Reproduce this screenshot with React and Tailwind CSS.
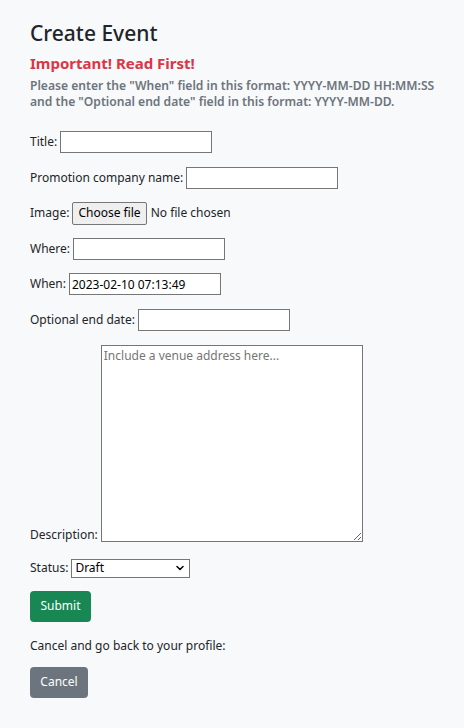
import { ChevronDown } from "lucide-react";

const font = { fontFamily: '"Segoe UI", "Noto Sans", "Liberation Sans", sans-serif' };

function Field({ label, children }) {
  return (
    <div className="flex items-center h-[22px] mb-[13.6px] text-[12px] text-[#212529]">
      <span className="mr-[3px]">{label}</span>
      {children}
    </div>
  );
}

function TextInput({ value = "" }) {
  return (
    <input
      type="text"
      defaultValue={value}
      className="w-[152px] h-[22px] border border-[#767676] bg-white px-[2px] text-[12px] text-black outline-none"
    />
  );
}

export default function App() {
  return (
    <div className="min-h-[728px] bg-[#f8f9fa] px-[30px] pt-[18px]" style={font}>
      <h1 className="text-[21px] font-medium leading-[30px] text-[#212529]">Create Event</h1>
      <h2 className="mt-[5px] text-[15px] font-bold leading-[20px] text-[#dc3545]">
        Important! Read First!
      </h2>
      <div className="mt-[5px] text-[12.1px] font-semibold leading-[16px] text-[#6c757d] whitespace-nowrap">
        <p>Please enter the "When" field in this format: YYYY-MM-DD HH:MM:SS</p>
        <p>and the "Optional end date" field in this format: YYYY-MM-DD.</p>
      </div>

      <form className="mt-[21px]">
        <Field label="Title:">
          <TextInput />
        </Field>
        <Field label="Promotion company name:">
          <TextInput />
        </Field>
        <Field label="Image:">
          <span className="h-[23px] px-[5px] flex items-center rounded-[2px] border border-[#767676] bg-[#efefef] text-[12px] text-black">
            Choose file
          </span>
          <span className="ml-[4px]">No file chosen</span>
        </Field>
        <Field label="Where:">
          <TextInput />
        </Field>
        <Field label="When:">
          <TextInput value="2023-02-10 07:13:49" />
        </Field>
        <Field label="Optional end date:">
          <TextInput />
        </Field>

        <div className="flex items-end text-[12px] text-[#212529] mb-[17px]">
          <span className="mr-[3px] leading-[16px] mb-[-1px]">Description:</span>
          <textarea
            placeholder="Include a venue address here..."
            className="w-[262px] h-[197px] border border-[#767676] bg-white px-[2px] pt-[1px] text-[12px] text-black placeholder:text-[#757575] outline-none"
          />
        </div>

        <div className="flex items-center h-[19px] text-[12px] text-[#212529]">
          <span className="mr-[3px]">Status:</span>
          <div className="relative w-[119px] h-[19px] border border-[#767676] bg-white flex items-center px-[3px] text-black">
            Draft
            <ChevronDown className="absolute right-[3px] w-[12px] h-[12px]" strokeWidth={3} />
          </div>
        </div>

        <button
          type="button"
          className="mt-[13px] h-[31px] w-[61px] rounded-[4px] bg-[#198754] text-[12px] text-white"
        >
          Submit
        </button>
      </form>

      <p className="mt-[15px] text-[12px] leading-[18px] text-[#212529]">Cancel and go back to your profile:</p>
      <button
        type="button"
        className="mt-[12px] h-[31px] w-[58px] rounded-[4px] bg-[#6c757d] text-[12px] text-white"
      >
        Cancel
      </button>
    </div>
  );
}
